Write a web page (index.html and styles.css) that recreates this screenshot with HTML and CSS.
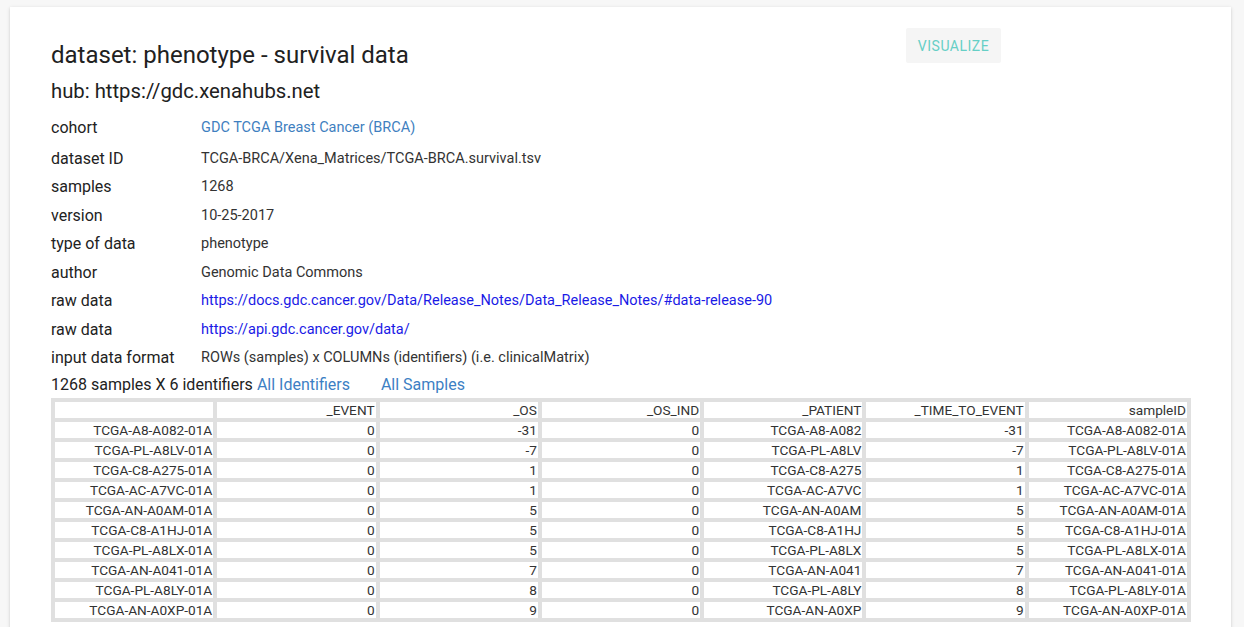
FILE: index.html
```html
<!DOCTYPE html>
<html>
<head>
<meta charset="utf-8">
<link rel="stylesheet" href="styles.css">
</head>
<body>
<div class="card">
  <div class="header">
    <div class="titles">
      <h2 class="title">dataset: phenotype - survival data</h2>
      <h3 class="hub">hub: https://gdc.xenahubs.net</h3>
    </div>
    <button class="visualize">VISUALIZE</button>
  </div>
  <div class="meta">
    <div class="row first"><span class="label">cohort</span><a class="value cohort" href="#">GDC TCGA Breast Cancer (BRCA)</a></div>
    <div class="row"><span class="label">dataset ID</span><span class="value">TCGA-BRCA/Xena_Matrices/TCGA-BRCA.survival.tsv</span></div>
    <div class="row"><span class="label">samples</span><span class="value">1268</span></div>
    <div class="row"><span class="label">version</span><span class="value">10-25-2017</span></div>
    <div class="row"><span class="label">type of data</span><span class="value">phenotype</span></div>
    <div class="row"><span class="label">author</span><span class="value">Genomic Data Commons</span></div>
    <div class="row"><span class="label">raw data</span><a class="value raw" href="#">https://docs.gdc.cancer.gov/Data/Release_Notes/Data_Release_Notes/#data-release-90</a></div>
    <div class="row"><span class="label">raw data</span><a class="value raw" href="#">https://api.gdc.cancer.gov/data/</a></div>
    <div class="row"><span class="label">input data format</span><span class="value">ROWs (samples) x COLUMNs (identifiers) (i.e. clinicalMatrix)</span></div>
  </div>
  <div class="summary">
    <span>1268 samples X 6 identifiers</span>
    <a class="sumlink" href="#">All Identifiers</a>
    <a class="sumlink" href="#">All Samples</a>
  </div>
  <table class="data">
    <thead>
      <tr><th></th><th>_EVENT</th><th>_OS</th><th>_OS_IND</th><th>_PATIENT</th><th>_TIME_TO_EVENT</th><th>sampleID</th></tr>
    </thead>
    <tbody>
      <tr><td>TCGA-A8-A082-01A</td><td>0</td><td>-31</td><td>0</td><td>TCGA-A8-A082</td><td>-31</td><td>TCGA-A8-A082-01A</td></tr>
      <tr><td>TCGA-PL-A8LV-01A</td><td>0</td><td>-7</td><td>0</td><td>TCGA-PL-A8LV</td><td>-7</td><td>TCGA-PL-A8LV-01A</td></tr>
      <tr><td>TCGA-C8-A275-01A</td><td>0</td><td>1</td><td>0</td><td>TCGA-C8-A275</td><td>1</td><td>TCGA-C8-A275-01A</td></tr>
      <tr><td>TCGA-AC-A7VC-01A</td><td>0</td><td>1</td><td>0</td><td>TCGA-AC-A7VC</td><td>1</td><td>TCGA-AC-A7VC-01A</td></tr>
      <tr><td>TCGA-AN-A0AM-01A</td><td>0</td><td>5</td><td>0</td><td>TCGA-AN-A0AM</td><td>5</td><td>TCGA-AN-A0AM-01A</td></tr>
      <tr><td>TCGA-C8-A1HJ-01A</td><td>0</td><td>5</td><td>0</td><td>TCGA-C8-A1HJ</td><td>5</td><td>TCGA-C8-A1HJ-01A</td></tr>
      <tr><td>TCGA-PL-A8LX-01A</td><td>0</td><td>5</td><td>0</td><td>TCGA-PL-A8LX</td><td>5</td><td>TCGA-PL-A8LX-01A</td></tr>
      <tr><td>TCGA-AN-A041-01A</td><td>0</td><td>7</td><td>0</td><td>TCGA-AN-A041</td><td>7</td><td>TCGA-AN-A041-01A</td></tr>
      <tr><td>TCGA-PL-A8LY-01A</td><td>0</td><td>8</td><td>0</td><td>TCGA-PL-A8LY</td><td>8</td><td>TCGA-PL-A8LY-01A</td></tr>
      <tr><td>TCGA-AN-A0XP-01A</td><td>0</td><td>9</td><td>0</td><td>TCGA-AN-A0XP</td><td>9</td><td>TCGA-AN-A0XP-01A</td></tr>
    </tbody>
  </table>
</div>
</body>
</html>
```

FILE: styles.css
```css
html, body {
  margin: 0;
  padding: 0;
}
body {
  background: #f7f7f7;
  font-family: Roboto, "Liberation Sans", sans-serif;
  color: #222;
  padding: 7px 13px 0 10px;
  overflow: hidden;
  height: 627px;
  box-sizing: border-box;
}
.card {
  background: #fff;
  box-shadow: 0 1px 4px rgba(0,0,0,0.12), 0 1px 2px rgba(0,0,0,0.08);
  padding: 20px 40px 40px 41px;
  min-height: 700px;
}
.header {
  width: 950px;
  display: flex;
  justify-content: space-between;
  align-items: flex-start;
}
.titles {
  padding-top: 12px;
}
.title {
  margin: 0;
  font-size: 24px;
  line-height: 32px;
  font-weight: 400;
  color: #212121;
}
.hub {
  margin: 6px 0 0;
  font-size: 20.3px;
  line-height: 28px;
  font-weight: 400;
  color: #212121;
}
.visualize {
  margin-top: 1px;
  width: 95px;
  height: 35px;
  border: none;
  border-radius: 2px;
  background: #f5f5f5;
  color: #66cfc6;
  font-family: Roboto, "Liberation Sans", sans-serif;
  font-size: 14px;
  font-weight: 400;
  letter-spacing: 0.5px;
  padding: 0;
}
.meta {
  margin-top: 7.75px;
}
.row {
  display: flex;
  align-items: center;
  height: 28.5px;
}
.row.first {
  margin-bottom: 2.5px;
}
.label {
  width: 150px;
  flex: none;
  font-size: 16px;
  color: #222;
}
.value {
  font-size: 14.5px;
  color: #333;
  text-decoration: none;
}
.cohort {
  color: #3f7fc0;
}
.raw {
  color: #1a1ae6;
}
.summary {
  display: flex;
  align-items: center;
  height: 26px;
  font-size: 16px;
  color: #222;
}
.sumlink {
  color: #3d7fc4;
  text-decoration: none;
  margin-left: 4px;
  margin-right: 27px;
}
.data {
  width: 100%;
  border-spacing: 4px;
  background: #e0e0e0;
  table-layout: fixed;
  font-size: 13.65px;
  color: #333;
}
.data th, .data td {
  background: #fff;
  height: 16px;
  line-height: 16px;
  padding: 0 1px 0 0;
  text-align: right;
  font-weight: 400;
  white-space: nowrap;
  overflow: hidden;
}
```
